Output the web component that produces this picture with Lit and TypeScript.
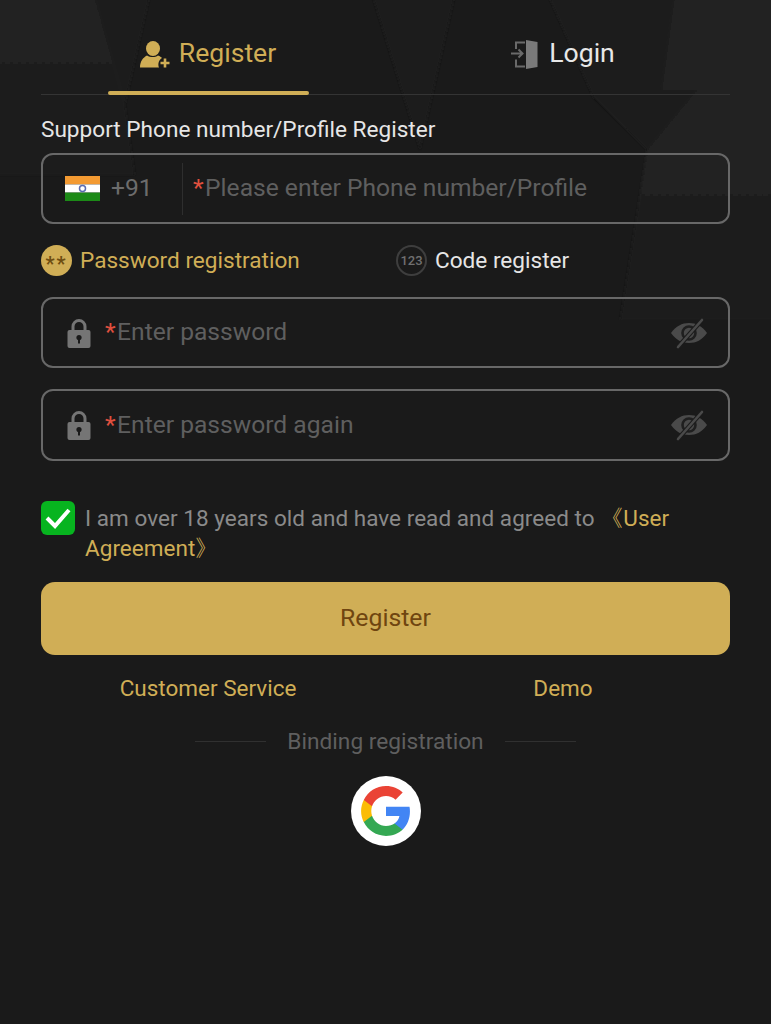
import { LitElement, html, css, svg } from "lit";
import { customElement } from "lit/decorators.js";

const eyeOff = html`<svg class="eye" viewBox="0 0 38 32" width="38" height="32">
  <path d="M1 16C6 9 12 6 19 6s13 3 18 10c-5 7-11 10-18 10S6 23 1 16Z" fill="#4a4a4a"/>
  <circle cx="19" cy="16" r="6.5" fill="none" stroke="#1f1f1f" stroke-width="2.6"/>
  <path d="M8 30 32 3" stroke="#1c1c1c" stroke-width="4.6"/>
  <path d="M8 30 32 3" stroke="#4a4a4a" stroke-width="2.6" stroke-linecap="round"/>
</svg>`;

const lock = html`<svg class="lock" viewBox="0 0 24 30" width="24" height="30">
  <path d="M6 13V8.5a6 6 0 0 1 12 0V13" fill="none" stroke="#757575" stroke-width="3"/>
  <rect x="0.5" y="12" width="23" height="18" rx="2" fill="#757575"/>
  <circle cx="12" cy="19.5" r="2.6" fill="#1a1a1a"/>
  <rect x="11" y="20" width="2" height="5.5" fill="#1a1a1a"/>
</svg>`;

@customElement("app-root")
export class AppRoot extends LitElement {
  static styles = css`
    :host {
      display: block;
      position: relative;
      width: 771px;
      height: 1024px;
      overflow: hidden;
      background: #1a1a1a;
      font-family: Roboto, "Liberation Sans", sans-serif;
      color: #e8e8e8;
    }
    .bg { position: absolute; left: 0; top: 0; pointer-events: none; }
    .page { position: relative; display: flex; flex-direction: column; padding: 0 41px; }
    .tabs { display: flex; gap: 21px; height: 95px; border-bottom: 1px solid #343434; box-sizing: border-box; }
    .tab {
      flex: 1; position: relative; display: flex; justify-content: center; align-items: flex-start;
      gap: 8px; font-size: 26.6px; height: 94px; box-sizing: border-box;
      padding-top: 35px; line-height: 36px;
    }
    .tab.on { color: #d0ae56; }
    .tab.on::after {
      content: ""; position: absolute; left: 67px; bottom: -1px; width: 201px; height: 4px;
      border-radius: 2px; background: #d0ae56;
    }
    .tab svg { display: block; }
    .ico-reg { margin-top: 6px; }
    .ico-log { margin-top: 5px; margin-right: 3px; }
    .label { margin-top: 20px; font-size: 22.6px; line-height: 30px; height: 38px; color: #e6e6e6; white-space: nowrap; }
    .field {
      box-sizing: border-box; height: 71px; border: 2px solid #686868; border-radius: 12px;
      display: flex; align-items: center; font-size: 24.6px; color: #5f5f5f;
    }
    .field + .field { height: 72px; }
    .flag { margin-left: 22px; display: block; }
    .code { margin-left: 11px; width: 71px; color: #6c6c6c; padding-bottom: 2px; }
    .sep { width: 1px; height: 52px; background: #2e2e2e; }
    .ph { margin-left: 10px; padding-bottom: 2px; }
    .star { color: #e0503f; margin-right: 1.5px; }
    .modes { display: flex; height: 73px; align-items: center; font-size: 22.6px; }
    .mode { display: flex; align-items: center; gap: 8px; }
    .mode.a { width: 355px; color: #d0ae56; }
    .mode.b { color: #e6e6e6; }
    .dot {
      box-sizing: border-box; width: 31px; height: 31px; border-radius: 50%; display: flex;
      align-items: center; justify-content: center;
    }
    .dot.gold { background: #d0ae56; color: #6e4d10; font-size: 20px; font-weight: 700; letter-spacing: 2px; padding-top: 7px; }
    .dot.line { border: 2px solid #3e3e3e; color: #707070; font-size: 13px; font-weight: 500; }
    .pw { padding-left: 24px; margin-bottom: 21px; }
    .pw + .pw { margin-bottom: 0; }
    .pw .ph { margin-left: 14px; flex: 1; }
    .eye { margin-right: 20px; display: block; }
    .lock { display: block; }
    .agree { display: flex; gap: 10px; margin-top: 40px; font-size: 22.5px; line-height: 30px; color: #8a8a8a; }
    .check { flex: none; width: 34px; height: 34px; border-radius: 6px; background: #07b41f; display: block; }
    .agree .txt { padding-top: 2px; width: 610px; letter-spacing: 0.04px; }
    .agree a { color: #d0ae56; }
    .btn {
      margin-top: 19px; height: 73px; border-radius: 14px; background: #d0ae56; color: #6f4510;
      display: flex; align-items: center; justify-content: center; font-size: 24.8px; padding-bottom: 2px; box-sizing: border-box;
    }
    .links { display: flex; gap: 21px; height: 67px; align-items: center; font-size: 22.5px; color: #d0ae56; padding-bottom: 2px; box-sizing: border-box; }
    .links span { flex: 1; text-align: center; }
    .bind { display: flex; align-items: center; justify-content: center; gap: 21px; height: 37px; font-size: 22.7px; color: #5f5f5f; padding-top: 1px; box-sizing: border-box; }
    .bind i { width: 71px; height: 1px; background: #303030; display: block; }
    .g {
      align-self: center; margin-top: 17px; width: 70px; height: 70px; border-radius: 50%;
      background: #fff; display: flex; align-items: center; justify-content: center;
    }
  `;

  render() {
    return html`
      <svg class="bg" width="771" height="320" viewBox="0 0 771 320">
        ${svg`
          <defs>
            <linearGradient id="l" gradientUnits="userSpaceOnUse" x1="0" y1="0" x2="0" y2="175">
              <stop offset="0" stop-color="#232323"/>
              <stop offset="1" stop-color="#1a1a1a"/>
            </linearGradient>
            <linearGradient id="r" gradientUnits="userSpaceOnUse" x1="0" y1="0" x2="0" y2="310">
              <stop offset="0" stop-color="#232323"/>
              <stop offset="0.55" stop-color="#212121"/>
              <stop offset="1" stop-color="#1a1a1a"/>
            </linearGradient>
            <linearGradient id="w" gradientUnits="userSpaceOnUse" x1="0" y1="0" x2="0" y2="170">
              <stop offset="0" stop-color="#1f1f1f"/>
              <stop offset="1" stop-color="#1b1b1b"/>
            </linearGradient>
            <filter id="s" x="-5%" y="-5%" width="110%" height="110%"><feGaussianBlur stdDeviation="1.2"/></filter>
          </defs>
          <g filter="url(#s)">
            <path d="M-5 -5H94L125 105 135 175H-5Z" fill="url(#l)"/>
            <path d="M94 -5H150L125 105Z" fill="#1e1e1e"/>
            <path d="M372 -5H455L420 150Z" fill="#1c1c1c"/>
            <path d="M675 -5H776V320H620L647 150 697 90 662 90Z" fill="url(#r)"/>
            <path d="M548 -5H675L662 90 697 90 647 150 593 97Z" fill="url(#w)"/>
          </g>
        `}
      </svg>
      <div class="page">
        <div class="tabs">
          <div class="tab on">
            <svg class="ico-reg ico" width="31" height="28" viewBox="0 0 31 28">
              <ellipse cx="13" cy="7.500" rx="7" ry="7.500" fill="#d0ae56"/>
              <path d="M0 26.500c0-6 3-10 7-12 3.500 2 8 2 11 0 2 .8 3 1.500 4 2.500-3 1.500-4.500 6-3 9.500H0Z" fill="#d0ae56"/>
              <path d="M25 17.500v9M20.500 22h9" stroke="#d0ae56" stroke-width="2.600"/>
            </svg>
            <span>Register</span>
          </div>
          <div class="tab">
            <svg class="ico-log ico" width="27" height="29" viewBox="0 0 27 29">
              <path d="M14 2.500H5V9M5 19.500V26.500H14" fill="none" stroke="#6a6a6a" stroke-width="2"/>
              <path d="M0 13.500H11M7.500 9.500l4 4-4 4" fill="none" stroke="#6a6a6a" stroke-width="2"/>
              <path d="M15 0 26.500 2V27L15 29Z" fill="#7a7a7a"/>
            </svg>
            <span>Login</span>
          </div>
        </div>
        <div class="label">Support Phone number/Profile Register</div>
        <div class="field">
          <svg class="flag" width="35" height="25" viewBox="0 0 35 25">
            <rect width="35" height="8.400" fill="#f39a32"/>
            <rect y="8.400" width="35" height="8.200" fill="#fff"/>
            <rect y="16.600" width="35" height="8.400" fill="#1c8a17"/>
            <circle cx="17.500" cy="12.500" r="3" fill="none" stroke="#5a6bb0" stroke-width="1.500"/>
          </svg>
          <span class="code">+91</span>
          <span class="sep"></span>
          <span class="ph"><span class="star">*</span>Please enter Phone number/Profile</span>
        </div>
        <div class="modes">
          <div class="mode a"><span class="dot gold">**</span><span>Password registration</span></div>
          <div class="mode b"><span class="dot line">123</span><span>Code register</span></div>
        </div>
        <div class="field pw">${lock}<span class="ph"><span class="star">*</span>Enter password</span>${eyeOff}</div>
        <div class="field pw">${lock}<span class="ph"><span class="star">*</span>Enter password again</span>${eyeOff}</div>
        <div class="agree">
          <svg class="check" viewBox="0 0 34 34">
            <path d="M6 17l8 8L28 9" fill="none" stroke="#fff" stroke-width="4"/>
          </svg>
          <div class="txt">I am over 18 years old and have read and agreed to <a>《User Agreement》</a></div>
        </div>
        <div class="btn">Register</div>
        <div class="links"><span>Customer Service</span><span>Demo</span></div>
        <div class="bind"><i></i><span>Binding registration</span><i></i></div>
        <div class="g">
          <svg width="52" height="52" viewBox="0 0 48 48">
            <path fill="#4285F4" d="M46.100 24.500c0-1.600-.1-3.100-.4-4.500H24v8.600h12.400c-.5 2.900-2.200 5.300-4.600 6.900v5.800h7.400c4.400-4 6.900-10 6.900-16.800Z"/>
            <path fill="#34A853" d="M24 47c6.200 0 11.500-2.100 15.300-5.600l-7.400-5.800c-2.100 1.400-4.700 2.200-7.900 2.200-6 0-11.100-4.100-12.900-9.500H3.500v5.900C7.300 41.800 15 47 24 47Z"/>
            <path fill="#FBBC05" d="M11.100 28.300c-.5-1.400-.7-2.800-.7-4.300s.3-3 .7-4.300v-5.900H3.500C2 16.800 1 20.300 1 24s.9 7.200 2.500 10.200l7.600-5.900Z"/>
            <path fill="#EA4335" d="M24 10.200c3.400 0 6.400 1.200 8.800 3.400l6.600-6.600C35.500 3.300 30.200 1 24 1 15 1 7.300 6.200 3.500 13.800l7.600 5.900c1.800-5.400 6.900-9.500 12.900-9.500Z"/>
          </svg>
        </div>
      </div>
    `;
  }
}
